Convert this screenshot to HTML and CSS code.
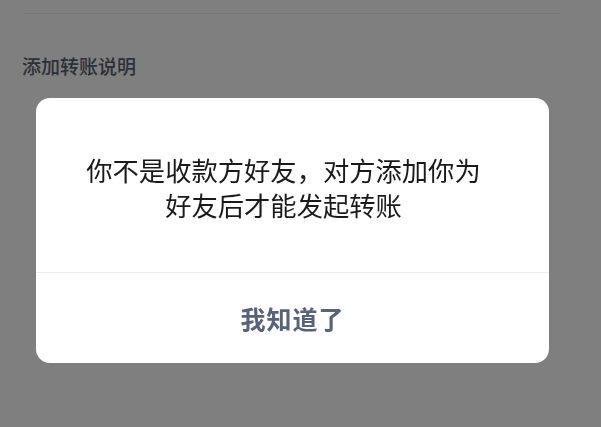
FILE: index.html
```html
<!DOCTYPE html>
<html lang="zh-CN">
<head>
<meta charset="utf-8">
<title>转账</title>
<link rel="stylesheet" href="styles.css">
</head>
<body>
  <main class="page">
    <div class="amount-row"></div>
    <div class="remark-link">添加转账说明</div>
  </main>

  <div class="mask">
    <div class="dialog" role="alertdialog">
      <div class="dialog-body">你不是收款方好友，对方添加你为<br>好友后才能发起转账</div>
      <button class="dialog-btn" type="button">我知道了</button>
    </div>
  </div>
</body>
</html>
```

FILE: styles.css
```css
html, body {
  margin: 0;
  padding: 0;
  height: 100%;
}

body {
  background: #fefefe;
  font-family: "Noto Sans CJK SC", "Noto Sans", sans-serif;
  overflow: hidden;
}

.page {
  padding: 0 41px 0 23px;
}

.amount-row {
  height: 13px;
  border-bottom: 1px solid #ececec;
}

.remark-link {
  margin-top: 38px;
  font-size: 19px;
  line-height: 28px;
  font-weight: 500;
  color: #5a6070;
  margin-left: -1px;
}

.mask {
  position: fixed;
  inset: 0;
  background: rgba(0, 0, 0, 0.5);
  padding: 98px 0 0 36px;
}

.dialog {
  width: 513px;
  height: 265px;
  background: #ffffff;
  border-radius: 14px;
  display: flex;
  flex-direction: column;
  overflow: hidden;
}

.dialog-body {
  height: 175px;
  box-sizing: border-box;
  padding: 54px 18px 0 0;
  border-bottom: 1px solid #ececec;
  text-align: center;
  font-size: 26.3px;
  line-height: 35px;
  color: #1a1a1a;
}

.dialog-btn {
  flex: 1;
  border: 0;
  background: transparent;
  padding: 0;
  font-family: inherit;
  font-size: 25px;
  font-weight: 700;
  letter-spacing: 1px;
  color: #58627c;
}
```
